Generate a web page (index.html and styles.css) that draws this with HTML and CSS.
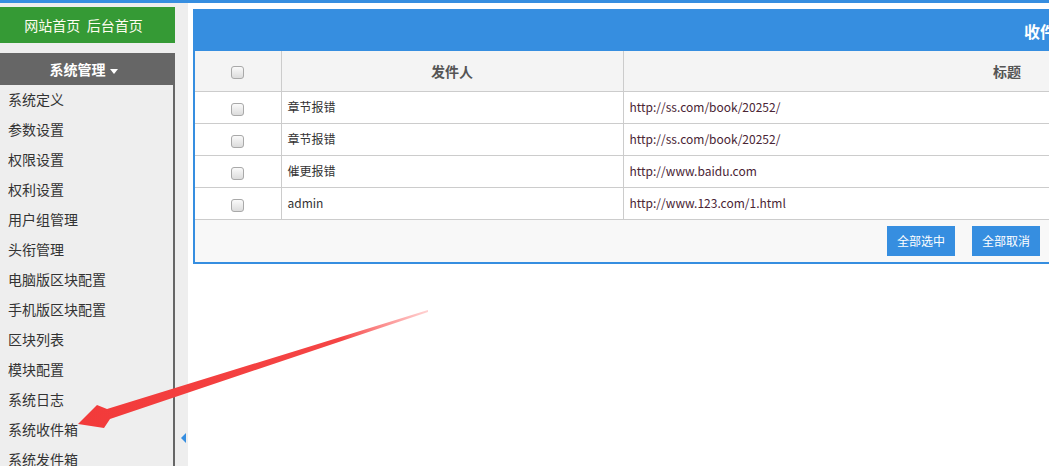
FILE: index.html
```html
<!DOCTYPE html>
<html lang="zh-CN">
<head>
  <meta charset="UTF-8">
  <title>系统收件箱</title>
  <link rel="stylesheet" href="styles.css">
</head>
<body>

  <div class="topbar"></div>

  <div class="layout">
    <!-- 左侧菜单 -->
    <aside class="side">
      <div class="side-main">
        <div class="links">网站首页&nbsp;&nbsp;后台首页</div>
        <div class="menu-title">系统管理<span class="caret"></span></div>
        <ul class="menu">
          <li>系统定义</li>
          <li>参数设置</li>
          <li>权限设置</li>
          <li>权利设置</li>
          <li>用户组管理</li>
          <li>头衔管理</li>
          <li>电脑版区块配置</li>
          <li>手机版区块配置</li>
          <li>区块列表</li>
          <li>模块配置</li>
          <li>系统日志</li>
          <li>系统收件箱</li>
          <li>系统发件箱</li>
        </ul>
      </div>
      <div class="gutter"><span class="toggle"></span></div>
    </aside>

    <!-- 收件箱 -->
    <main class="content">
      <div class="box">
        <div class="box-title">收件箱</div>
        <table class="list">
          <tr>
            <th class="col-check"><span class="check"></span></th>
            <th class="col-from">发件人</th>
            <th class="col-title">标题</th>
            <th class="col-time">时间</th>
            <th class="col-op">操作</th>
          </tr>
          <tr>
            <td class="col-check"><span class="check"></span></td>
            <td>章节报错</td>
            <td class="url">http://ss.com/book/20252/</td>
            <td></td>
            <td></td>
          </tr>
          <tr>
            <td class="col-check"><span class="check"></span></td>
            <td>章节报错</td>
            <td class="url">http://ss.com/book/20252/</td>
            <td></td>
            <td></td>
          </tr>
          <tr>
            <td class="col-check"><span class="check"></span></td>
            <td>催更报错</td>
            <td class="url">http://www.baidu.com</td>
            <td></td>
            <td></td>
          </tr>
          <tr>
            <td class="col-check"><span class="check"></span></td>
            <td>admin</td>
            <td class="url">http://www.123.com/1.html</td>
            <td></td>
            <td></td>
          </tr>
        </table>
        <div class="box-foot">
          <button class="btn">全部选中</button>
          <button class="btn">全部取消</button>
        </div>
      </div>
    </main>
  </div>

  <!-- 标注箭头 -->
  <svg class="arrow" width="1049" height="466" viewBox="0 0 1049 466">
    <defs>
      <linearGradient id="fade" x1="79" y1="424" x2="429" y2="311" gradientUnits="userSpaceOnUse">
        <stop offset="0" stop-color="#f23a3a"/>
        <stop offset="0.75" stop-color="#f54545"/>
        <stop offset="1" stop-color="#ff6b6b" stop-opacity="0.3"/>
      </linearGradient>
    </defs>
    <polygon fill="url(#fade)" points="428,310 107,409 97,405 78,424 104,428 110,419 428,312"/>
  </svg>

</body>
</html>
```

FILE: styles.css
```css
* {
  box-sizing: border-box;
}

html, body {
  margin: 0;
  height: 100%;
  overflow: hidden;
}

body {
  font-family: "Noto Sans CJK SC", "Noto Sans", sans-serif;
  background: #fff;
  color: #333;
}

.topbar {
  height: 3px;
  background: #368ee0;
}

.layout {
  display: flex;
  height: calc(100vh - 3px);
}

/* 左侧 */
.side {
  display: flex;
  width: 188px;
  flex-shrink: 0;
  background: #eee;
}

.side-main {
  width: 175px;
  display: flex;
  flex-direction: column;
}

.links {
  margin-top: 4px;
  height: 36px;
  line-height: 36px;
  padding-right: 8px;
  background: #359a35;
  color: #fffdf0;
  font-size: 14px;
  text-align: center;
}

.menu-title {
  margin-top: 10px;
  height: 32px;
  line-height: 32px;
  padding-right: 8px;
  background: #666;
  color: #fff;
  font-size: 14px;
  font-weight: bold;
  text-align: center;
}

.caret {
  display: inline-block;
  margin-left: 4px;
  vertical-align: middle;
  border-left: 4px solid transparent;
  border-right: 4px solid transparent;
  border-top: 5px solid #fff;
}

.menu {
  flex: 1;
  margin: 0;
  padding: 0;
  list-style: none;
  border-right: 2px solid #666;
}

.menu li {
  height: 30px;
  line-height: 29px;
  padding-left: 8px;
  font-size: 14px;
  color: #333;
}

.gutter {
  flex: 1;
  padding-top: 430px;
  padding-left: 6px;
}

.toggle {
  display: block;
  width: 0;
  height: 0;
  border-top: 5px solid transparent;
  border-bottom: 5px solid transparent;
  border-right: 5px solid #368ee0;
}

/* 右侧 */
.content {
  flex: 1;
  min-width: 0;
  padding: 6px 0 0 5px;
}

.box {
  width: 1710px;
  border: 2px solid #368ee0;
}

.box-title {
  height: 40px;
  line-height: 40px;
  background: #368ee0;
  color: #fff;
  font-size: 16px;
  font-weight: bold;
  text-align: center;
}

.list {
  width: 100%;
  border-collapse: collapse;
  table-layout: fixed;
}

.list th,
.list td {
  border: 1px solid #ccc;
  padding: 0 6px;
}

.list tr:first-child th {
  border-top: none;
}

.list th:first-child,
.list td:first-child {
  border-left: none;
}

.list th:last-child,
.list td:last-child {
  border-right: none;
}

.list th {
  height: 40px;
  background: #f4f4f4;
  color: #555;
  font-size: 14px;
  font-weight: bold;
}

.list td {
  height: 32px;
  padding-bottom: 1px;
  font-size: 12px;
  color: #333;
}

.list td.url {
  color: #4a2535;
}

.col-check {
  width: 86px;
  text-align: center;
}

.list td.col-check {
  padding-bottom: 0;
}

.col-from {
  width: 342px;
}

.col-title {
  width: 768px;
}

.check {
  display: inline-block;
  width: 13px;
  height: 13px;
  vertical-align: middle;
  border: 1px solid #a9a9a9;
  border-radius: 3px;
  background: linear-gradient(#fafafa, #dcdcdc);
}

.box-foot {
  display: flex;
  gap: 17px;
  padding: 6px 0 6px 692px;
  background: #f8f8f8;
}

.btn {
  width: 68px;
  height: 30px;
  padding: 0;
  border: none;
  background: #368ee0;
  color: #fff;
  font-family: inherit;
  font-size: 12px;
  cursor: pointer;
}

.arrow {
  position: absolute;
  top: 0;
  left: 0;
  pointer-events: none;
}
```
